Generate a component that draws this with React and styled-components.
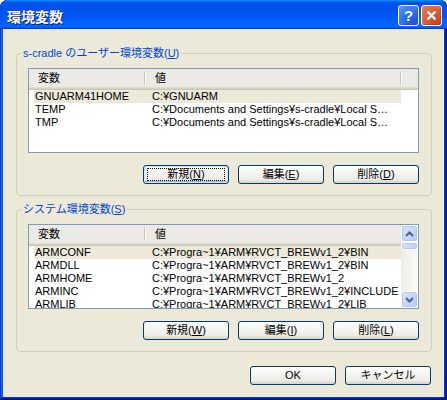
import React from "react";
import styled, { createGlobalStyle } from "styled-components";

const GlobalStyle = createGlobalStyle`
  html, body {
    margin: 0;
    padding: 0;
    background: #ffffff;
  }
  body {
    font-family: "Liberation Sans", "Noto Sans CJK JP", sans-serif;
    font-size: 11px;
    color: #000;
  }
`;

const Window = styled.div`
  width: 447px;
  height: 400px;
  box-sizing: border-box;
  display: flex;
  flex-direction: column;
  background: #0855dd;
  border-radius: 8px 7px 0 0;
  overflow: hidden;
  box-shadow: inset -1px -1px #00138c, inset 1px 1px #0831d9,
    inset -2px -2px #001ea0, inset 2px 2px #166aee, inset -3px -3px #003bda,
    inset 3px 3px #0855dd;
`;

const TitleBar = styled.div`
  height: 29px;
  flex-shrink: 0;
  display: flex;
  align-items: center;
  padding: 0 5px 0 7px;
  background: linear-gradient(
    180deg,
    #0997ff,
    #0053ee 8%,
    #0050ee 40%,
    #0066ff 88%,
    #0066ff 93%,
    #005bff 95%,
    #003dd7 96%,
    #003dd7
  );
`;

const Title = styled.div`
  flex: 1;
  padding-top: 2px;
  color: #fff;
  font-family: "Noto Sans CJK JP", sans-serif;
  font-weight: bold;
  font-size: 14px;
  line-height: 16px;
  text-shadow: 1px 1px #0a1883;
`;

const CaptionButtons = styled.div`
  display: flex;
  gap: 2px;
  margin-top: 2px;
`;

const CaptionButton = styled.div`
  width: 21px;
  height: 21px;
  box-sizing: border-box;
  border: 1px solid #fff;
  border-radius: 3px;
  display: flex;
  align-items: center;
  justify-content: center;
  color: #fff;
  font-family: "Liberation Sans", sans-serif;
  font-weight: bold;
  font-size: 15px;
  line-height: 1;
  background: ${(p) =>
    p.$close
      ? "radial-gradient(circle at 80% 85%, #cc4419 0%, #e0582f 45%, #ea7d5c 100%)"
      : "radial-gradient(circle at 80% 85%, #1a54e0 0%, #2c6cf0 45%, #5c97fb 100%)"};
  box-shadow: inset -1px -1px rgba(0, 0, 0, 0.15);
`;

const Client = styled.div`
  flex: 1;
  margin: 0 3px 3px;
  background: #ece9d8;
  display: flex;
  flex-direction: column;
  padding: 24px 12px 0 13px;
`;

const Group = styled.div`
  display: flex;
  flex-direction: column;
  border: 1px solid #d0d0bf;
  border-radius: 4px;
  padding: 0 12px 11px 11px;
  margin-top: ${(p) => p.$gap || 0}px;
`;

const Legend = styled.div`
  align-self: flex-start;
  margin: -7px 0 0 -7px;
  padding: 0 2px;
  height: 13px;
  line-height: 13px;
  background: #ece9d8;
  color: #0046d5;
  white-space: nowrap;
`;

const ListView = styled.div`
  margin-top: 8px;
  height: 85px;
  box-sizing: border-box;
  border: 1px solid #7f9db9;
  background: #fff;
  display: flex;
  overflow: hidden;
`;

const ListBody = styled.div`
  flex: 1;
  min-width: 0;
  display: flex;
  flex-direction: column;
  overflow: hidden;
`;

const Header = styled.div`
  display: flex;
  flex-shrink: 0;
  height: 21px;
  background: linear-gradient(
    180deg,
    #ebeae4 0 18px,
    #e2decd 18px 19px,
    #d6d2c2 19px 20px,
    #cbc7b8 20px 21px
  );
`;

const HeaderCell = styled.div`
  width: ${(p) => p.$width}px;
  box-sizing: border-box;
  padding-left: 9px;
  height: 18px;
  line-height: 18px;
  white-space: nowrap;
`;

const HeaderDivider = styled.div`
  width: 2px;
  height: 14px;
  margin-top: 2px;
  background: linear-gradient(90deg, #c7c5b2 0 1px, #ffffff 1px 2px);
`;

const Row = styled.div`
  display: flex;
  flex-shrink: 0;
  width: 367px;
  margin-left: 5px;
  height: 13px;
  line-height: 13px;
  background: ${(p) => (p.$selected ? "#ece9d8" : "transparent")};
`;

const NameCell = styled.div`
  width: 112px;
  padding-left: 1px;
  box-sizing: border-box;
  white-space: nowrap;
  overflow: hidden;
`;

const ValueCell = styled.div`
  flex: 1;
  min-width: 0;
  padding-left: 6px;
  white-space: nowrap;
  overflow: hidden;
`;

const ScrollBar = styled.div`
  width: 17px;
  flex-shrink: 0;
  display: flex;
  flex-direction: column;
  background: linear-gradient(90deg, #eeede5, #fcfcf9);
`;

const ScrollPart = styled.div`
  box-sizing: border-box;
  height: ${(p) => p.$height}px;
  border: 1px solid #fff;
  border-radius: 3px;
  display: flex;
  align-items: center;
  justify-content: center;
  background: linear-gradient(135deg, #dce7fe 0%, #c6d6fc 50%, #b5c9f7 100%);
  box-shadow: inset 0 0 0 1px #b0c6f6;
`;

const ScrollTrack = styled.div`
  flex: 1;
`;

const ButtonRow = styled.div`
  display: flex;
  justify-content: flex-end;
  gap: 9px;
  margin-top: ${(p) => p.$gap || 12}px;
  padding-right: ${(p) => p.$inset || 0}px;
`;

const Button = styled.div`
  position: relative;
  width: 86px;
  height: 19px;
  box-sizing: border-box;
  border: 1px solid #003c74;
  border-radius: 3px;
  background: linear-gradient(
    180deg,
    #ffffff 0%,
    #f5f5f1 40%,
    #ecebe6 80%,
    #d6d0c5 100%
  );
  text-align: center;
  line-height: 17px;
  white-space: nowrap;
  box-shadow: ${(p) =>
    p.$default ? "inset 0 0 0 1px #cee7ff, inset 0 -1px 0 1px #98b8ea" : "none"};

  &::after {
    content: "";
    display: ${(p) => (p.$default ? "block" : "none")};
    position: absolute;
    inset: 2px 3px;
    border: 1px dotted #000;
  }
`;

const Chevron = ({ up }) => (
  <svg width="9" height="6" viewBox="0 0 9 6">
    <polyline
      points={up ? "1,5 4.5,1.5 8,5" : "1,1 4.5,4.5 8,1"}
      fill="none"
      stroke="#4d6185"
      strokeWidth="2"
    />
  </svg>
);

const Close = () => (
  <svg width="11" height="11" viewBox="0 0 11 11">
    <path d="M1.5 1.5 L9.5 9.5 M9.5 1.5 L1.5 9.5" stroke="#fff" strokeWidth="2.4" />
  </svg>
);

const LOCAL = "C:¥Documents and Settings¥s-cradle¥Local S…";
const ARM = "C:¥Progra~1¥ARM¥RVCT_BREWv1_2";

const USER_VARS = [
  ["GNUARM41HOME", "C:¥GNUARM"],
  ["TEMP", LOCAL],
  ["TMP", LOCAL],
];

const SYSTEM_VARS = [
  ["ARMCONF", ARM + "¥BIN"],
  ["ARMDLL", ARM + "¥BIN"],
  ["ARMHOME", ARM],
  ["ARMINC", ARM + "¥INCLUDE"],
  ["ARMLIB", ARM + "¥LIB"],
];

const VarList = ({ rows, scroll }) => (
  <ListView>
    <ListBody>
      <Header>
        <HeaderCell $width={115}>変数</HeaderCell>
        <HeaderDivider />
        <HeaderCell $width={254}>値</HeaderCell>
        {!scroll && <HeaderDivider />}
      </Header>
      {rows.map(([name, value], i) => (
        <Row key={name} $selected={i === 0}>
          <NameCell>{name}</NameCell>
          <ValueCell>{value}</ValueCell>
        </Row>
      ))}
    </ListBody>
    {scroll && (
      <ScrollBar>
        <ScrollPart $height={17}>
          <Chevron up />
        </ScrollPart>
        <ScrollPart $height={8} />
        <ScrollTrack />
        <ScrollPart $height={17}>
          <Chevron />
        </ScrollPart>
      </ScrollBar>
    )}
  </ListView>
);

const Key = ({ children }) => <u>{children}</u>;

export default function App() {
  return (
    <>
      <GlobalStyle />
      <Window>
        <TitleBar>
          <Title>環境変数</Title>
          <CaptionButtons>
            <CaptionButton>?</CaptionButton>
            <CaptionButton $close>
              <Close />
            </CaptionButton>
          </CaptionButtons>
        </TitleBar>
        <Client>
          <Group>
            <Legend>
              s-cradle のユーザー環境変数(<Key>U</Key>)
            </Legend>
            <VarList rows={USER_VARS} />
            <ButtonRow>
              <Button $default>
                新規(<Key>N</Key>)
              </Button>
              <Button>
                編集(<Key>E</Key>)
              </Button>
              <Button>
                削除(<Key>D</Key>)
              </Button>
            </ButtonRow>
          </Group>
          <Group $gap={13}>
            <Legend>
              システム環境変数(<Key>S</Key>)
            </Legend>
            <VarList rows={SYSTEM_VARS} scroll />
            <ButtonRow>
              <Button>
                新規(<Key>W</Key>)
              </Button>
              <Button>
                編集(<Key>I</Key>)
              </Button>
              <Button>
                削除(<Key>L</Key>)
              </Button>
            </ButtonRow>
          </Group>
          <ButtonRow $gap={14} $inset={1}>
            <Button>OK</Button>
            <Button>キャンセル</Button>
          </ButtonRow>
        </Client>
      </Window>
    </>
  );
}
